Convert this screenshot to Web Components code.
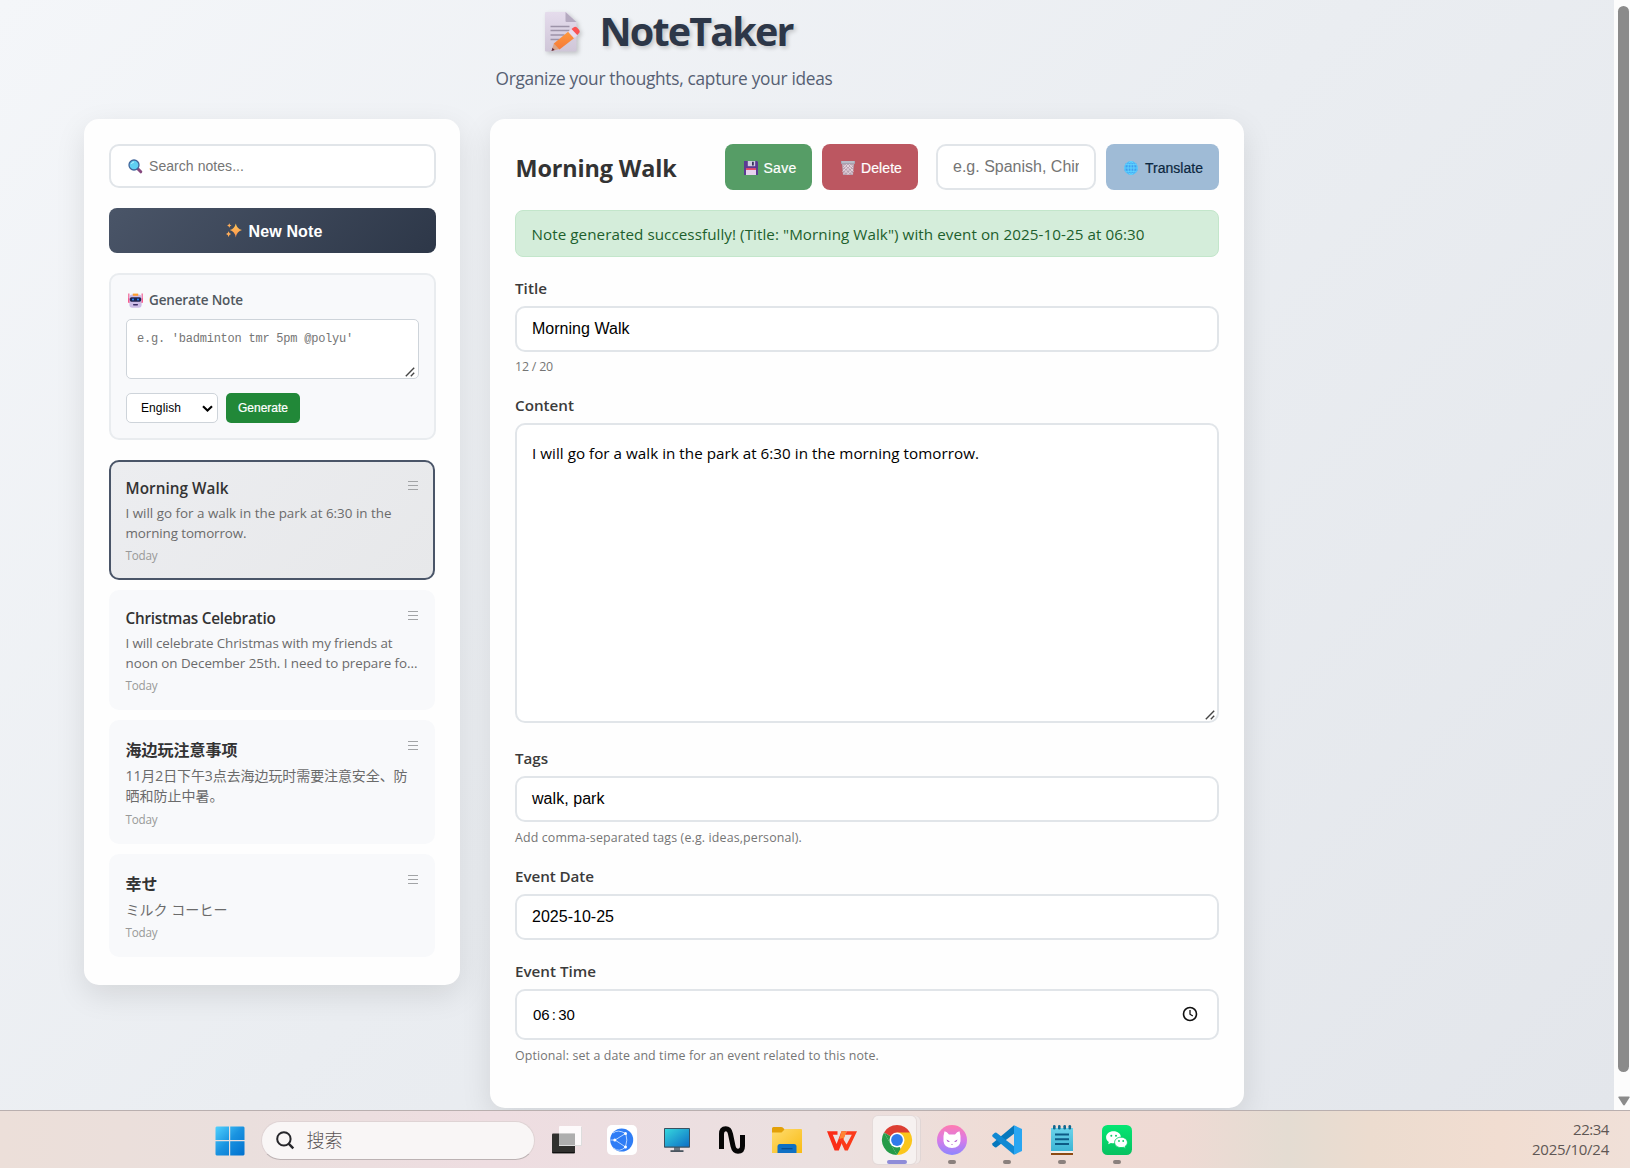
<!DOCTYPE html>
<html lang="en">
<head>
<meta charset="utf-8">
<title>NoteTaker</title>
<style>
html,body{margin:0;height:100%;overflow:hidden}
body{display:flex;flex-direction:column;font-family:"Open Sans","Noto Sans CJK SC",sans-serif;color:#333}
</style>
</head>
<body>
<note-app></note-app>
<task-bar></task-bar>
<script>
const ICONS = {
memo:`<svg viewBox="0 0 36 42"><defs><linearGradient id="p" x2="0" y2="1"><stop stop-color="#e5dcec"/><stop offset="1" stop-color="#cfc6d8"/></linearGradient><linearGradient id="o" x2="0" y2="1"><stop stop-color="#ff9a3c"/><stop offset="1" stop-color="#f5793a"/></linearGradient></defs><path d="M1 1h20l10.500 10v28.500q0 1-1 1H1q-1 0-1-1V2q0-1 1-1z" fill="url(#p)"/><path d="M20.500 1v9q0 1 1 1h10z" fill="#b5aac0"/><g stroke="#9d93a8" stroke-width="1.500"><path d="M5.500 15.500h19M5.500 19.500h19M5.500 24h14M5.500 28.500h9"/></g><path d="M6.500 40l2.500-8 5.500 6z" fill="#d9a58a"/><path d="M6.500 40l1-3.200 2.200 2.200z" fill="#5d2a42"/><path d="M8.800 32.500L24 20l6 6.500-15.500 12z" fill="url(#o)"/><path d="M23 20.800l3.500-2.800 6 6.500-3.500 2.800z" fill="#e8dcee"/><path d="M26.500 18l2-1.600q2-1.300 3.700.4l1.800 2q1.500 2-.2 3.500l-1.500 1.700z" fill="#fb5252"/></svg>`,
search:`<svg viewBox="0 0 15 15"><path d="M9.500 9.500l3.300 3.300" stroke="#86497f" stroke-width="3" stroke-linecap="round"/><circle cx="6" cy="6" r="5" fill="#5fd0f3" stroke="#41659b" stroke-width="1.300"/><path d="M3.400 5Q4 3.200 6 3" stroke="#b9f2ff" fill="none"/></svg>`,
sparkle:`<svg viewBox="0 0 16 15"><defs><linearGradient id="s" x2="0" y2="1"><stop stop-color="#ffc957"/><stop offset="1" stop-color="#ff8f4d"/></linearGradient></defs><path d="M9.800.5q1.100 5.400 6.200 6.600-5.100 1.200-6.200 7.400-1.100-6.200-6-7.400 4.900-1.200 6-6.600z" fill="url(#s)"/><path d="M3.300.3q.3 1.900 2.200 2.200-1.900.4-2.200 2.300-.3-1.900-2.200-2.300Q3 2.200 3.300.3zM2.600 8.300q.4 2.300 2.500 2.800-2.100.5-2.500 2.900Q2.200 11.600 0 11.100q2.200-.5 2.600-2.800z" fill="#ffae5b"/></svg>`,
robot:`<svg viewBox="0 0 15 15"><path d="M.8.500v6M14.200.500v6" stroke="#f06c9b" stroke-width="1.300"/><rect x="0" y="5" width="2.600" height="5" rx="1" fill="#fa5c8e"/><rect x="12.400" y="5" width="2.600" height="5" rx="1" fill="#fa5c8e"/><rect x="1.400" y="1.500" width="12.200" height="13.200" rx="3" fill="#cdbbe6"/><path d="M4.800.6h5.400v2.200H4.800z" fill="#ff9d2e"/><rect x="1.800" y="4.300" width="11.400" height="4.400" rx="1.600" fill="#1f2350"/><circle cx="5" cy="6.400" r="1" fill="#2f8dff"/><circle cx="10" cy="6.400" r="1" fill="#2f8dff"/><rect x="5" y="10.900" width="5" height="1.500" rx=".7" fill="#3c2d66"/></svg>`,
save:`<svg viewBox="0 0 14 14"><path d="M0 0h13l1 1v13H0z" fill="#5b3b93"/><path d="M3.800 0h7.400v5.200H3.800z" fill="#cfd0e0"/><path d="M8 .8h1.800v3.600H8z" fill="#37325c"/><path d="M2 7.500h10V14H2z" fill="#e6d3ee"/><path d="M2 7.300h10v1.500H2z" fill="#e9304e"/></svg>`,
trash:`<svg viewBox="0 0 14 14"><path d="M.8 2.500h12.400L12 14H2z" fill="#b9a3b1"/><path d="M0 0h14v2.800H0z" fill="#a5aab8"/><path d="M1 1h12" stroke="#c9ccd6"/><path d="M2.500 4l9 9M5.500 3.500l7 7M8.500 3.500L12 7M2.500 8l5.500 5.500M11.500 4l-9 9M8.500 3.500l-7 7M5.500 3.500L2.200 7M11.800 8l-5.500 5.500" stroke="#efdfe7" stroke-width=".8"/></svg>`,
globe:`<svg viewBox="0 0 14 14"><circle cx="7" cy="7" r="6.800" fill="#3f9df0"/><g fill="none" stroke="#5fd4ff"><ellipse cx="7" cy="7" rx="3" ry="6.500"/><path d="M7 .5v13M.5 7h13M1.500 3.700h11M1.500 10.300h11"/><circle cx="7" cy="7" r="6.300"/></g></svg>`,
clock:`<svg viewBox="0 0 16 16" fill="none" stroke="#111" stroke-width="1.600"><circle cx="8" cy="8" r="6.500"/><path d="M8 4v4.200l2.800 1.800" stroke-width="1.300"/></svg>`,
chevron:`<svg viewBox="0 0 11 7"><path d="M1 1.200l4.500 4.300L10 1.200" fill="none" stroke="#000" stroke-width="2.100"/></svg>`,
menu:`<svg viewBox="0 0 10 10" shape-rendering="crispEdges"><path d="M0 1.500h9.500M0 5.500h9.500M0 9.500h9.500" stroke="#a2a4a6"/></svg>`,
grip:`<svg viewBox="0 0 10 10"><path d="M.8 9.200l8.400-8.400M5.800 9.200l3.400-3.400" stroke="#454545" stroke-width="1.400"/></svg>`,
win:`<svg viewBox="0 0 30 30"><defs><linearGradient id="w2" gradientUnits="userSpaceOnUse" x1="0" y1="0" x2="29" y2="29"><stop stop-color="#52d3ff"/><stop offset=".5" stop-color="#1a93e0"/><stop offset="1" stop-color="#0071cf"/></linearGradient></defs><path fill="url(#w2)" d="M1.500.500H14V14H.500V1.500zM15.200.500H28.500l1 1V14H15.200zM.500 15.200H14V29.500H1.500l-1-1zM15.200 15.200h14.300v13.300l-1 1H15.200z"/></svg>`,
find:`<svg viewBox="0 0 18 18" fill="none" stroke="#26262a" stroke-width="2"><circle cx="7.900" cy="7.900" r="6.700"/><path d="M12.600 12.600l4.700 4.700" stroke-width="2.400"/></svg>`,
taskview:`<svg viewBox="0 0 30 30"><rect x="0" y="8.500" width="23" height="20" rx="1" fill="#30302e"/><path d="M.5 27.500h22" stroke="#111"/><rect x="7" y="1" width="22.500" height="19.500" rx="1" fill="#fff" opacity=".85"/><path d="M7 8.500h16v12H8l-1-1z" fill="#a9a9a8" opacity=".9"/><path d="M7 20.500h22.500V2" fill="none" stroke="#ddd"/></svg>`,
browser:`<svg viewBox="0 0 30 30"><rect width="30" height="30" rx="5" fill="#fff"/><circle cx="14.700" cy="15" r="11.500" fill="#2f7df6"/><path d="M18.500 8.500L8 15l10.500 7M8 15H3.500M18.500 8.500Q11 4 6 8M18.500 22Q12 28 6.500 23M18.800 8.500Q21 15 18.500 22" fill="none" stroke="#b9d6ff" stroke-width="1"/><g fill="#fff"><circle cx="7.800" cy="15" r="1.500"/><circle cx="18.500" cy="8.500" r="1.500"/><circle cx="18.500" cy="22" r="1.500"/></g></svg>`,
monitor:`<svg viewBox="0 0 30 30"><defs><linearGradient id="m" x2="1" y2="1"><stop stop-color="#35d6dd"/><stop offset="1" stop-color="#0d6fc6"/></linearGradient></defs><path d="M12 22h6v4h-6z" fill="#6d7883"/><path d="M8.500 25.200h13v1.800h-13z" fill="#4a555f"/><rect x="2" y="3" width="26" height="19.700" rx=".8" fill="#3a5161"/><path d="M3 4h24v17.500H3z" fill="url(#m)"/></svg>`,
wave:`<svg viewBox="0 0 30 30"><path d="M4.500 24V9Q4.500 3.700 8.700 3.700Q12.500 3.700 13.500 9L16 21Q17.200 26.300 21 26.300Q25.500 26.300 25.500 21V10" fill="none" stroke="#060606" stroke-width="5"/></svg>`,
folder:`<svg viewBox="0 0 30 30"><defs><linearGradient id="f" x2="1" y2="1"><stop stop-color="#ffdc70"/><stop offset="1" stop-color="#f9bb13"/></linearGradient></defs><path d="M0 3.500Q0 2 1.500 2H9q1.500 0 2.300 1L13 5v4H0z" fill="#e3a008"/><path d="M0 7.500h9.500L13 4h16q1 0 1 1v23H0z" fill="url(#f)"/><path d="M5.500 28v-6.500q0-2.500 2.500-2.500h14q2.500 0 2.500 2.500V28z" fill="#0f70c4"/><path d="M9.500 23.700h11" stroke="#0a4b8c" stroke-width="1.200"/></svg>`,
wps:`<svg viewBox="0 0 30 30"><path d="M0 6.200h10.500v3.600H5.800l3.800 9.200L14.500 6.200h5L11.800 25.500H7.600z" fill="#fb2c17"/><path d="M14.500 6.200h5.200L15 18l-2.600-4.600z" fill="#ff8433"/><path d="M12.600 14l3-1 4 6.500 5.200-9.700h-6.500l1.500-3.600H30L20.800 25.500h-3z" fill="#fb3a1a"/></svg>`,
chrome:`<svg viewBox="0 0 30 30"><path d="M15 15L2 7.500A15 15 0 0 1 28 7.500z" fill="#dc3e32"/><path d="M2 7.500L8.500 18.700 15 30A15 15 0 0 1 2 7.500z" fill="#259b48"/><path d="M2 7.500L15 15l4 10-4 5z" fill="#259b48"/><path d="M28 7.500H15L21.500 18.700 15 30A15 15 0 0 0 28 7.500z" fill="#fbc61c"/><circle cx="15" cy="15" r="7.500" fill="#fff"/><circle cx="15" cy="15" r="5.900" fill="#2f7bea"/></svg>`,
cat:`<svg viewBox="0 0 30 30"><defs><linearGradient id="c" x2="0" y2="1"><stop stop-color="#ff7bb0"/><stop offset=".5" stop-color="#d87be8"/><stop offset="1" stop-color="#8c86ff"/></linearGradient></defs><circle cx="15" cy="15" r="15" fill="url(#c)"/><path d="M7.500 6.300q-1.600 5-1 10 .8 6.700 8.500 6.700t8.500-6.700q.6-5-1-10-2.500.6-4.500 3.200h-6Q10 6.900 7.500 6.300z" fill="#fff"/><path d="M9.500 14.500l3.500 2q-3 1.500-3.500-2zM20.500 14.500l-3.500 2q3 1.500 3.500-2zM14 19h2l-1 1z" fill="#b35bcf"/></svg>`,
vscode:`<svg viewBox="0 0 30 30"><path d="M22 .2L30 4v22l-8 3.800z" fill="#29a6f2"/><path d="M22 .2v8.500L4.500 22.200q-1 .6-2-.2L.6 20.300q-1-1 0-2z" fill="#0678bd"/><path d="M22 29.800v-8.500L4.500 7.800q-1-.6-2 .2L.6 9.700q-1 1 0 2z" fill="#1089d3"/></svg>`,
notepad:`<svg viewBox="0 0 30 30"><defs><linearGradient id="n" x2="0" y2="1"><stop stop-color="#6bd3ea"/><stop offset="1" stop-color="#3cb4d4"/></linearGradient></defs><path d="M4 26h22v4H4z" fill="#8d4a12"/><path d="M4 24.500h22V28H4z" fill="#f3eee9"/><path d="M4 3h22v23H4z" fill="url(#n)"/><g stroke="#0d5a85" stroke-width="2"><path d="M8 9.500h14M8 14.300h14M8 19h14"/></g><g fill="#12688f"><rect x="6" y="0" width="2.600" height="4.500" rx="1.300"/><rect x="11" y="0" width="2.600" height="4.500" rx="1.300"/><rect x="16.400" y="0" width="2.600" height="4.500" rx="1.300"/><rect x="21.500" y="0" width="2.600" height="4.500" rx="1.300"/></g></svg>`,
wechat:`<svg viewBox="0 0 30 30"><defs><linearGradient id="g" x2="0" y2="1"><stop stop-color="#05e673"/><stop offset="1" stop-color="#07c160"/></linearGradient></defs><rect width="30" height="30" rx="5.500" fill="url(#g)"/><path d="M11.500 6.200c-4.300 0-7.400 2.700-7.400 6.100 0 2 1 3.600 2.700 4.700l-.6 2.300 2.700-1.400q1.300.3 2.600.3 7.400-.5 7.400-6.100c0-3.300-3.200-5.900-7.400-5.900z" fill="#fff"/><path d="M19 12.200c-3.800 0-6.400 2.400-6.400 5.200s2.700 5.200 6.400 5.200q1.200 0 2.300-.3l2.200 1.200-.5-1.900c1.500-1 2.400-2.500 2.400-4.200 0-2.900-2.800-5.200-6.400-5.200z" fill="#fff" stroke="#07d067" stroke-width=".9"/><g fill="#07cc65"><circle cx="9.300" cy="10.700" r="1"/><circle cx="14" cy="10.700" r="1"/><circle cx="17" cy="16" r=".9"/><circle cx="21.200" cy="16" r=".9"/></g></svg>`
};
const define = (name, render) => customElements.define(name, class extends HTMLElement {
  connectedCallback() {
    if (this.shadowRoot) return;
    this.attachShadow({mode: 'open'}).innerHTML = render(this);
  }
});
const attr = (el, n, d = '') => el.getAttribute(n) ?? d;

define('app-icon', el => `<style>:host{display:block;flex:none;width:${attr(el,'w',15)}px;height:${attr(el,'h',attr(el,'w',15))}px}svg{display:block;width:100%;height:100%;overflow:visible}</style>${ICONS[attr(el,'name')]}`);

// Single line of text tracked so that it occupies the width given in "w".
class UiText extends HTMLElement {
  connectedCallback() {
    if (this.shadowRoot) return;
    this.attachShadow({mode: 'open'}).innerHTML = `<style>:host{display:block;flex:none;white-space:nowrap}span{display:inline-block}</style><span><slot></slot></span>`;
    const target = +this.getAttribute('w');
    if (!target) return;
    const span = this.shadowRoot.querySelector('span');
    const n = [...this.textContent].length;
    span.style.letterSpacing = ((target - span.getBoundingClientRect().width) / n).toFixed(3) + 'px';
  }
}

define('app-header', () => `<style>
:host{display:flex;flex-direction:column;align-items:center;height:119px;padding-top:6px;box-sizing:border-box}
.h{display:flex;align-items:center;height:50px;margin-left:9px}
.h ui-text{font:700 39.5px/50px "Open Sans",sans-serif;color:#2d3748;text-shadow:2px 2px 4px rgba(0,0,0,.2);margin-left:19px}
app-icon{filter:drop-shadow(2px 2px 2px rgba(0,0,0,.2));margin-top:2px}
.s{font:400 17.300px/24px "Open Sans",sans-serif;color:#566073;margin-top:11px}
</style><div class="h"><app-icon name="memo" w="36" h="42"></app-icon><ui-text w="193">NoteTaker</ui-text></div><ui-text class="s" w="337">Organize your thoughts, capture your ideas</ui-text>`);

define('surface-card', () => `<style>:host{display:flex;flex-direction:column;box-sizing:border-box;background:#fefefe;border-radius:15px;padding:25px;box-shadow:0 10px 30px rgba(0,0,0,.1)}::slotted(*){flex:none}</style><slot></slot>`);

define('search-box', () => `<style>:host{display:flex;align-items:center;height:44px;width:327px;box-sizing:border-box;border:2px solid #e1e5e9;border-radius:10px;background:#fff;padding-left:17px;gap:6px;font:14px/20px "Liberation Sans",sans-serif;color:#757575;margin-bottom:20px}</style><app-icon name="search"></app-icon><ui-text w="95">Search notes...</ui-text>`);

define('new-note-button', () => `<style>:host{display:flex;align-items:center;justify-content:center;gap:7px;box-sizing:border-box;padding-left:3px;height:45px;width:327px;border-radius:8px;background:linear-gradient(135deg,#4a5568,#2d3748);color:#fff;font:700 16px/22px "Liberation Sans",sans-serif;margin-bottom:20px}ui-text{padding-top:2px}</style><app-icon name="sparkle" w="16" h="15"></app-icon><ui-text w="74">New Note</ui-text>`);

define('note-generator', () => `<style>
:host{display:flex;flex-direction:column;box-sizing:border-box;width:327px;height:167px;border:2px solid #e9ecef;border-radius:10px;background:#f8f9fb;padding:15px;margin-bottom:20px}
.l{display:flex;align-items:center;gap:6px;height:20px;margin:0 0 9px 2px;font:600 13.500px/20px "Open Sans",sans-serif;color:#515860}
.t{display:flex;justify-content:space-between;box-sizing:border-box;height:60px;border:1px solid #ced4da;border-radius:5px;background:#fff;padding:11px 3px 1px 10px;font:12px/16px "Liberation Mono",monospace;color:#757575;margin-bottom:14px}
.t app-icon{align-self:flex-end}
.r{display:flex;gap:8px;height:30px;font:12px/30px "Liberation Sans",sans-serif}
.sel{display:flex;align-items:center;justify-content:space-between;box-sizing:border-box;width:92px;border:1px solid #ced4da;border-radius:5px;background:#fff;color:#000;padding:0 4px 0 14px}
.b{display:flex;align-items:center;justify-content:center;width:74px;border-radius:5px;background:#218838;color:#fff;-webkit-text-stroke:.2px #fff}
</style><div class="l"><app-icon name="robot"></app-icon><ui-text w="94">Generate Note</ui-text></div>
<div class="t"><ui-text w="216">e.g. 'badminton tmr 5pm @polyu'</ui-text><app-icon name="grip" w="10"></app-icon></div>
<div class="r"><div class="sel"><ui-text w="40">English</ui-text><app-icon name="chevron" w="11" h="7"></app-icon></div><div class="b"><ui-text w="50">Generate</ui-text></div></div>`);

define('note-card', el => {
  const lines = attr(el,'text').split('|'), ws = attr(el,'tw').split('|');
  const cjk = el.hasAttribute('cjk');
  return `<style>
:host{display:flex;justify-content:space-between;box-sizing:border-box;width:326px;height:${attr(el,'h')}px;border-radius:10px;border:2px solid #f8f9fb;background:#f8f9fb;padding:${attr(el,'pt',16)}px 15.500px 0 14.500px;margin-bottom:10px}
:host([active]){border-color:#4a5568;background:linear-gradient(135deg,#ecedf0,#e7e8ea)}
.t{font:600 ${cjk?16:15.3}px/20px "Open Sans","Noto Sans CJK SC",sans-serif;${cjk?'font-weight:700;':''}color:#333;margin-bottom:${attr(el,'g',5)}px}
.p{font:400 ${cjk?14:13.4}px/20px "Open Sans","Noto Sans CJK SC",sans-serif;color:#6b6b6b}
.d{font:400 11.700px/16px "Open Sans",sans-serif;color:#999;margin-top:${attr(el,'dg',4)}px}
app-icon{margin-top:${attr(el,'mt',2)}px}
.c{width:280px}
</style><div class="c"><ui-text class="t" w="${attr(el,'w')}">${attr(el,'heading')}</ui-text>${lines.map((l,i)=>`<ui-text class="p" w="${ws[i]}">${l}</ui-text>`).join('')}<ui-text class="d" w="32">Today</ui-text></div><app-icon name="menu" w="10" h="10"></app-icon>`;
});

define('side-bar', () => `<style>:host{display:block}surface-card{width:376px;height:866px}</style><surface-card>
<search-box></search-box><new-note-button></new-note-button><note-generator></note-generator>
<note-card active h="120" heading="Morning Walk" w="103" text="I will go for a walk in the park at 6:30 in the|morning tomorrow." tw="266|121"></note-card>
<note-card h="120" heading="Christmas Celebratio" w="150" text="I will celebrate Christmas with my friends at|noon on December 25th. I need to prepare fo..." tw="267|292"></note-card>
<note-card cjk h="124" pt="18" g="6" dg="5" mt="0" heading="海边玩注意事项" w="112" text="11月2日下午3点去海边玩时需要注意安全、防|晒和防止中暑。" tw="282|98"></note-card>
<note-card cjk h="103" pt="18" g="6" dg="4" mt="0" heading="幸せ" w="32" text="ミルク コーヒー" tw="102"></note-card>
</surface-card>`);

define('action-button', el => `<style>:host{display:flex;align-items:center;justify-content:center;gap:${attr(el,'gap',6)}px;box-sizing:border-box;padding-left:${attr(el,'pl',3)}px;height:46px;width:${attr(el,'bw')}px;border-radius:8px;background:${attr(el,'bg')};color:${attr(el,'fg','#fff')};font:14px/20px "Liberation Sans",sans-serif;-webkit-text-stroke:.2px currentColor}ui-text{padding-top:1px}app-icon{margin-top:1px}</style><app-icon name="${attr(el,'icon')}" w="14"></app-icon><ui-text w="${attr(el,'w')}">${attr(el,'label')}</ui-text>`);

define('editor-toolbar', () => `<style>
:host{display:flex;height:46px;align-items:center;margin-bottom:20px}
.t{flex:1;font:700 23.400px/46px "Open Sans",sans-serif;color:#333;padding:2px 0 0 .5px}
action-button{margin-left:10px}
.i{box-sizing:border-box;width:160px;height:46px;border:2px solid #e1e5e9;border-radius:10px;background:#fff;padding:0 15px;margin-left:18px;font:16px/42px "Liberation Sans",sans-serif;color:#757575}
.i div{overflow:hidden}
</style><ui-text class="t" w="161">Morning Walk</ui-text>
<action-button icon="save" bg="#569d66" bw="87" w="33" label="Save"></action-button>
<action-button icon="trash" bg="#bc5761" bw="96" w="41" label="Delete"></action-button>
<div class="i"><div><ui-text>e.g. Spanish, Chinese</ui-text></div></div>
<action-button icon="globe" bg="#9fbbd6" fg="#0c2740" bw="113" gap="7" pl="2" w="58" label="Translate"></action-button>`);

define('alert-bar', () => `<style>:host{display:flex;align-items:center;box-sizing:border-box;height:47px;border:1px solid #c3e6cb;border-radius:8px;background:#d4edda;color:#1d5f2d;padding-left:15.500px;font:400 15.200px/22px "Open Sans",sans-serif;margin-bottom:21px}</style><ui-text w="613">Note generated successfully! (Title: "Morning Walk") with event on 2025-10-25 at 06:30</ui-text>`);

define('form-field', el => {
  const area = el.hasAttribute('area');
  return `<style>
:host{display:block;height:${attr(el,'h')}px}
.l{font:600 15.200px/20px "Open Sans",sans-serif;color:#3b3b3b;margin-bottom:8px}
.b{display:flex;align-items:${area?'flex-start':'center'};justify-content:space-between;box-sizing:border-box;height:${attr(el,'bh',46)}px;border:2px solid #e1e5e9;border-radius:10px;background:#fff;color:#000;padding:${area?'16px 2px 1px 15px':'0 19.500px 0 15px'};font:${area?'400 15.200px/24px "Open Sans"':'16px/22px "Liberation Sans"'},sans-serif}
.b app-icon[name=grip]{align-self:flex-end}
.b app-icon[name=clock]{margin-top:-1px}
.n{font:400 12.400px/16px "Open Sans",sans-serif;color:#757575;margin-top:${attr(el,'hg',8)}px}
.m{font-size:15px;padding:0 0 0 1px;letter-spacing:-.2px}.m i{font-style:normal;margin:0 2.500px}
</style><ui-text class="l" w="${attr(el,'lw')}">${attr(el,'label')}</ui-text>
<div class="b">${el.hasAttribute('time')?'<div class="m">06<i>:</i>30</div><app-icon name="clock" w="16"></app-icon>':`<ui-text w="${attr(el,'vw')}">${attr(el,'value')}</ui-text>`}${area?'<app-icon name="grip" w="10"></app-icon>':''}</div>
${el.hasAttribute('hint')?`<ui-text class="n" w="${attr(el,'hw')}">${attr(el,'hint')}</ui-text>`:''}`;
});

define('note-editor', () => `<style>:host{display:block}surface-card{width:754px;height:989px}</style><surface-card>
<editor-toolbar></editor-toolbar><alert-bar></alert-bar>
<form-field h="117" label="Title" lw="32" value="Morning Walk" vw="97.5" hint="12 / 20" hw="38" hg="7"></form-field>
<form-field area h="353" bh="300" label="Content" lw="59" value="I will go for a walk in the park at 6:30 in the morning tomorrow." vw="447"></form-field>
<form-field h="118" label="Tags" lw="33" value="walk, park" vw="72.5" hint="Add comma-separated tags (e.g. ideas,personal)." hw="287"></form-field>
<form-field h="95" label="Event Date" lw="79" value="2025-10-25" vw="82"></form-field>
<form-field time h="110" bh="51" label="Event Time" lw="81" hint="Optional: set a date and time for an event related to this note." hw="364"></form-field>
</surface-card>`);

define('scroll-bar', () => `<style>:host{display:flex;flex-direction:column;align-items:center;width:12px;padding:6px 0 4px 4px;background:#fcfcfc;box-sizing:content-box}.t{width:11px;height:1066px;border-radius:6px;background:#8b8b8b;margin-right:2px}svg{display:block;margin-top:24px}</style><div class="t"></div><svg width="12" height="10"><path d="M1 .5h10q1.200 0 .6 1L7 8.800q-1 1.200-2 0L.4 1.500Q-.2.500 1 .5z" fill="#8b8b8b"/></svg>`);

define('note-app', () => `<style>
:host{display:flex;height:1110px;overflow:hidden;flex:none}
.page{flex:1;padding-left:84px;background:linear-gradient(135deg,#f4f6f9 0%,#eaedf1 50%,#e3e6eb 100%)}
.w{width:1160px}.cols{display:flex;gap:30px;align-items:flex-start}
</style><div class="page"><div class="w"><app-header></app-header><div class="cols"><side-bar></side-bar><note-editor></note-editor></div></div></div><scroll-bar></scroll-bar>`);

define('task-item', el => `<style>
:host{display:flex;flex-direction:column;align-items:center;box-sizing:border-box;width:55px;height:57px;padding-top:14px;flex:none}
i{width:8px;height:4px;border-radius:2px;background:#8a807d;margin-top:5px}
.a{display:flex;flex-direction:column;align-items:center;box-sizing:border-box;width:43px;height:48px;border-radius:5px;background:#f6f1f0;box-shadow:0 0 0 1px #e4dad9,4px 0 0 0 #f0e8e7,5px 0 0 0 #e0d6d5;margin-top:-9px;padding:9px 0 0 5px;margin-left:-5px}
.a i{width:20px;background:#8f8cd8}
</style>${el.hasAttribute('active')?`<div class="a"><app-icon name="${attr(el,'icon')}" w="30"></app-icon><i></i></div>`:`<app-icon name="${attr(el,'icon')}" w="30"></app-icon>${el.hasAttribute('open')?'<i></i>':''}`}`);

define('task-bar', () => `<style>
:host{display:flex;height:58px;box-sizing:border-box;border-top:1px solid #b9afaf;background:linear-gradient(90deg,#ecdfd9 0%,#eadfdd 15%,#eedde1 30%,#ebe0e0 50%,#efdcd5 62%,#efdad4 72%,#e4dcd2 79%,#ecdccf 84%,#f1ddd1 92%,#f0e0d8 100%);padding-left:215px}
.s{display:flex;align-items:center;flex:none;box-sizing:border-box;width:274px;height:39px;border-radius:20px;background:#f9f6f6;border:1px solid #dfd3d4;border-bottom-color:#bcb2b3;margin:10px 4px 0 16px;padding-left:13.500px;gap:13px;font:300 18px/36px "Noto Sans CJK SC",sans-serif;color:#5a5455}
.s ui-text{margin-top:-3px}.s app-icon{margin-top:-1px}
.win{margin-top:15px}.c{flex:1;display:flex;flex-direction:column;align-items:flex-end;padding:8px 21px 0 0;font:400 15px/20px "Open Sans",sans-serif;color:#5f5754}
.c ui-text{height:20px}
</style><app-icon class="win" name="win" w="30"></app-icon>
<div class="s"><app-icon name="find" w="18"></app-icon><ui-text w="36">搜索</ui-text></div>
${['taskview','browser','monitor','wave','folder','wps'].map(n=>`<task-item icon="${n}"></task-item>`).join('')}<task-item active icon="chrome"></task-item>${['cat','vscode','notepad','wechat'].map(n=>`<task-item open icon="${n}"></task-item>`).join('')}
<div class="c"><ui-text w="36">22:34</ui-text><ui-text w="77">2025/10/24</ui-text></div>`);

customElements.define('ui-text', UiText);
</script>
</body>
</html>
